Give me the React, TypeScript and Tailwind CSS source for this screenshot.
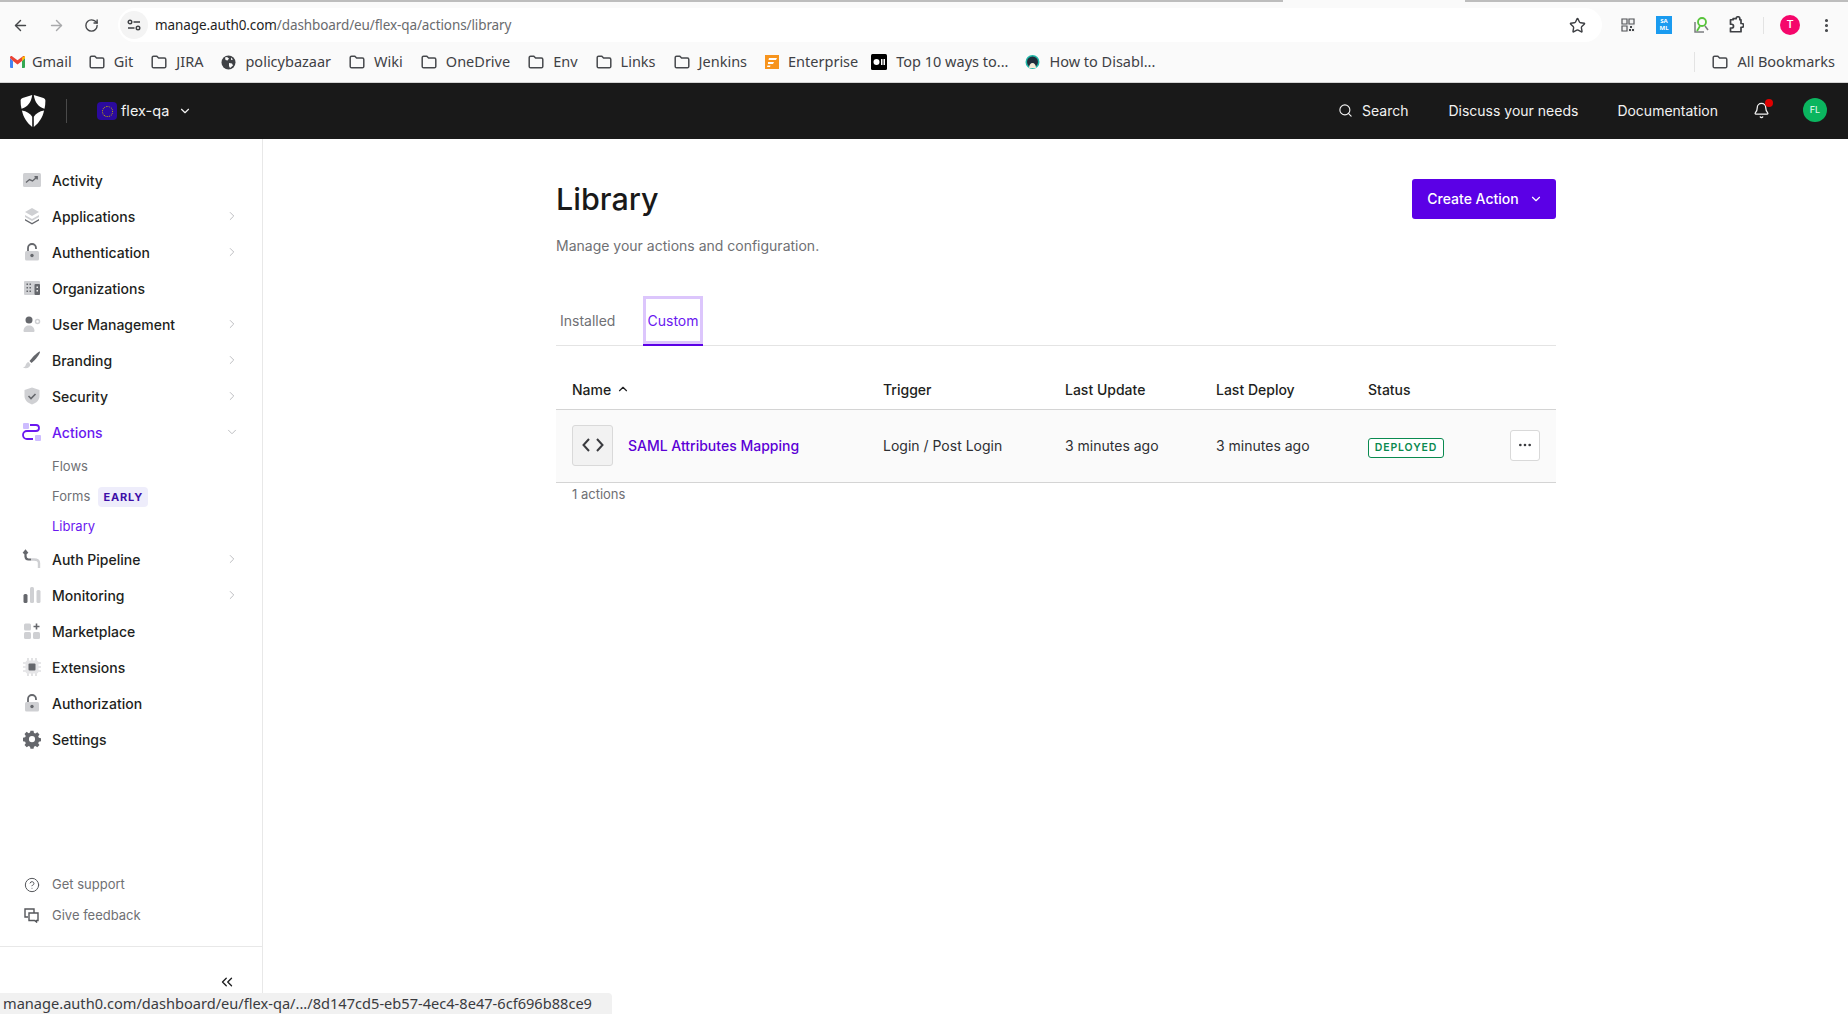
import { ArrowLeft, ArrowRight, RotateCw, Star, Search, Bell, ChevronRight, ChevronDown, ChevronUp, ChevronsLeft, Ellipsis, CircleHelp, MoreVertical } from 'lucide-react';
import type { ReactNode } from 'react';

const inter = 'font-["Inter",sans-serif]';
const L = '#cfd0d3';
const D = '#65676c';

function Folder() {
  return (
    <svg width="16" height="14" viewBox="0 0 16 14" fill="none" stroke="#47494d" strokeWidth="1.5" className="shrink-0">
      <path d="M1.2 2.6c0-.8.6-1.4 1.4-1.4h3.2l1.8 1.9h5.8c.8 0 1.4.6 1.4 1.4v6.9c0 .8-.6 1.4-1.4 1.4H2.6c-.8 0-1.4-.6-1.4-1.4z" />
    </svg>
  );
}

function GmailIcon() {
  return (
    <svg width="15" height="12" viewBox="0 0 15 12" className="mr-[-2px] shrink-0">
      <path d="M0 2v9a1 1 0 0 0 1 1h2V5z" fill="#4285f4" />
      <path d="M12 5v7h2a1 1 0 0 0 1-1V2z" fill="#34a853" />
      <path d="M0 1.5C0 .2 1.4-.4 2.4.4L7.5 4.3 12.6.4c1-.8 2.4-.2 2.4 1.1V2l-3 3-4.500 3.400L3 5 0 2z" fill="#ea4335" />
      <path d="M12 1.500 15 0v2l-3 3z" fill="#fbbc04" />
    </svg>
  );
}

function Globe() {
  return (
    <svg width="15" height="15" viewBox="0 0 15 15" className="shrink-0">
      <circle cx="7.500" cy="7.500" r="7" fill="#3f4145" />
      <path d="M4 2.500 6 2l2 1.500-1.500 2L4.500 5zM8 8l3 .5 1 2-3 2.500-1-2zM10 2.500l2 2-2 .5z" fill="#fafafa" />
    </svg>
  );
}

function Bookmark({ icon, label, className = '' }: { icon: ReactNode; label: string; className?: string }) {
  return (
    <div className={`flex items-center gap-[9px] ${className}`}>
      {icon}
      <span className="whitespace-nowrap">{label}</span>
    </div>
  );
}

function ChromeBar() {
  return (
    <div className="shrink-0 bg-[#fafafa] font-['Noto_Sans',sans-serif]">
      <div className="flex h-[2px]">
        <div className="w-[1283px] bg-[#bdbdbd]" />
        <div className="w-[182px]" />
        <div className="flex-1 bg-[#bdbdbd]" />
      </div>
      <div className="h-[6px]" />
      <div className="flex h-[34px] items-center">
        <div className="flex w-[118px] shrink-0 items-center gap-[19px] pl-[12px]">
          <ArrowLeft size={17} strokeWidth={2} color="#45474a" />
          <ArrowRight size={17} strokeWidth={2} color="#a8a9ab" />
          <RotateCw size={15} strokeWidth={2.200} color="#45474a" />
        </div>
        <div className="flex h-[34px] w-[1484px] items-center rounded-full bg-white">
          <div className="ml-[2px] flex h-[28px] w-[28px] items-center justify-center rounded-full bg-[#f4f4f4]">
            <svg width="14" height="12" viewBox="0 0 14 12" fill="none" stroke="#3e4044" strokeWidth="1.400">
              <circle cx="3" cy="3" r="1.800" />
              <path d="M6.500 3H13M1 9h6.500" />
              <circle cx="11" cy="9" r="1.800" />
            </svg>
          </div>
          <span className="ml-[7px] whitespace-nowrap text-[13.500px] tracking-[-0.1px] text-[#1f1f1f]">
            manage.auth0.com<span className="text-[#6a6b6e]">/dashboard/eu/flex-qa/actions/library</span>
          </span>
          <Star size={17} strokeWidth={2} color="#3e4044" className="ml-auto mr-[16px]" />
        </div>
        <div className="flex flex-1 items-center pl-[19px]">
          <svg width="14" height="14" viewBox="0 0 14 14" className="shrink-0">
            <rect width="14" height="14" fill="#f1f1f1" />
            <path d="M1 1h5v5H1zM8 1h5v5H8zM1 8h5v5H1z" fill="none" stroke="#55575b" strokeWidth="1.200" />
            <path d="M9 8h2v2H9zM11 11h2v2h-2zM8 11h2v2H8z" fill="#45474a" />
          </svg>
          <div className="ml-[21px] flex h-[18px] w-[16px] shrink-0 flex-col items-center justify-center bg-[#1a9bf0] text-[6px] font-bold leading-[7px] text-white">
            <span>SA</span>
            <span>ML</span>
          </div>
          <svg width="18" height="18" viewBox="0 0 18 18" fill="none" className="ml-[20px] shrink-0">
            <path d="M3 6v10h9" stroke="#7b7d80" strokeWidth="1.500" />
            <circle cx="10" cy="6" r="4" stroke="#58c43c" strokeWidth="1.800" />
            <path d="M8 10l-3 5" stroke="#58c43c" strokeWidth="1.800" />
            <path d="M13 10l3 4" stroke="#7b7d80" strokeWidth="1.500" />
          </svg>
          <svg width="18" height="18" viewBox="0 0 24 24" fill="none" stroke="#3e4044" strokeWidth="2.300" strokeLinejoin="round" className="ml-[16px] shrink-0">
            <path d="M9.500 3.500h4a2.500 2.500 0 0 1 5 0V5H20v5h1a2.500 2.500 0 0 1 0 5h-1v6H6v-5h1.500a2.500 2.500 0 0 0 0-5H6V5h3.500z" />
          </svg>
          <div className="ml-[19px] h-[17px] w-[1px] bg-[#e3e3e3]" />
          <div className="ml-[16px] flex h-[20px] w-[20px] shrink-0 items-center justify-center rounded-full bg-[#f5066b] font-['Roboto',sans-serif] text-[11px] font-medium text-white">T</div>
          <MoreVertical size={17} strokeWidth={2.400} color="#45474a" className="ml-[18px] shrink-0" />
        </div>
      </div>
      <div className="flex h-[41px] items-center border-b border-[#d4d4d4] pl-[10px] text-[14.500px] text-[#3f4145]">
        <Bookmark icon={<GmailIcon />} label="Gmail" />
        <Bookmark icon={<Folder />} label="Git" className="ml-[17px]" />
        <Bookmark icon={<Folder />} label="JIRA" className="ml-[18px]" />
        <Bookmark icon={<Globe />} label="policybazaar" className="ml-[18px]" />
        <Bookmark icon={<Folder />} label="Wiki" className="ml-[18px]" />
        <Bookmark icon={<Folder />} label="OneDrive" className="ml-[18px]" />
        <Bookmark icon={<Folder />} label="Env" className="ml-[18px]" />
        <Bookmark icon={<Folder />} label="Links" className="ml-[18px]" />
        <Bookmark icon={<Folder />} label="Jenkins" className="ml-[18px]" />
        <Bookmark
          icon={
            <svg width="14" height="14" viewBox="0 0 14 14" className="shrink-0">
              <rect width="14" height="14" fill="#f7941d" />
              <path d="M4 3h8L11 5H3.500zM3 7h6L8 9H3zM2.500 10.500h3L5 12H2z" fill="#fff" />
            </svg>
          }
          label="Enterprise"
          className="ml-[18px]"
        />
        <Bookmark
          icon={
            <svg width="16" height="16" viewBox="0 0 16 16" className="shrink-0">
              <rect width="16" height="16" rx="1.500" fill="#000" />
              <circle cx="5.500" cy="8" r="3" fill="#fff" />
              <path d="M10 5h1.500v6H10zM12.500 5H14v6h-1.500z" fill="#fff" />
            </svg>
          }
          label="Top 10 ways to..."
          className="ml-[13px]"
        />
        <Bookmark
          icon={
            <svg width="15" height="16" viewBox="0 0 15 16" className="shrink-0">
              <circle cx="7.500" cy="8" r="7" fill="#21b7a8" />
              <circle cx="7.500" cy="8" r="5.500" fill="#1f2d3a" />
              <path d="M4 14c0-3 1.500-5 3.500-5s3.500 2 3.500 5z" fill="#f2e9d5" />
            </svg>
          }
          label="How to Disabl..."
          className="ml-[17px]"
        />
        <div className="ml-auto h-[20px] w-[1px] bg-[#e3e3e3]" />
        <Bookmark icon={<Folder />} label="All Bookmarks" className="ml-[17px] mr-[13px]" />
      </div>
    </div>
  );
}

function Logo() {
  return (
    <svg width="26" height="32" viewBox="0 0 26 32" fill="#fff">
      <path d="M12.200 0 2.600 2.900C1.400 3.300.6 4.400.6 5.700c0 2.800.3 5.500.9 8.100 5.700-1.300 9.900-6.700 10.700-13.800z" />
      <path d="M13.800 0l9.600 2.900c1.200.4 2 1.500 2 2.800 0 2.800-.3 5.500-.9 8.100-5.700-1.300-9.900-6.700-10.700-13.800z" />
      <path d="M1.900 15.600c1.500 6.900 5.100 12.500 10.300 16.400V21.800c-1.900-3.100-5.700-5.500-10.300-6.200z" />
      <path d="M24.100 15.600c-1.500 6.900-5.100 12.500-10.300 16.400V21.800c1.900-3.100 5.700-5.500 10.300-6.200z" />
    </svg>
  );
}

function TopNav() {
  return (
    <div className={`flex h-[56px] shrink-0 items-center bg-[#191919] text-[14px] text-[#f2f2f2] ${inter}`}>
      <div className="ml-[20px]">
        <Logo />
      </div>
      <div className="ml-[20px] h-[24px] w-[1px] bg-[#4a4a4a]" />
      <div className="ml-[30px] flex h-[18px] w-[20px] items-center justify-center rounded-[4px] bg-[#2b0a9e]">
        <div className="h-[11px] w-[11px] rounded-full border border-dotted border-[#c8b400]" />
      </div>
      <span className="ml-[4px] text-[14.500px]">flex-qa</span>
      <ChevronDown size={14} strokeWidth={2} className="ml-[9px]" />
      <div className="ml-auto flex items-center pb-[2px]">
        <Search size={15} strokeWidth={1.800} />
        <span className="ml-[9px]">Search</span>
        <span className="ml-[40px]">Discuss your needs</span>
        <span className="ml-[39px]">Documentation</span>
        <div className="relative ml-[35px]">
          <Bell size={17} strokeWidth={1.800} />
          <div className="absolute right-[-3px] top-[-3px] h-[8px] w-[8px] rounded-full bg-[#e00000]" />
        </div>
        <div className="ml-[33px] mr-[21px] flex h-[24px] w-[24px] items-center justify-center rounded-full bg-[#0bb55f] text-[9px] font-medium text-[#d9f5e5]">FL</div>
      </div>
    </div>
  );
}

// duotone sidebar glyphs, two greys like the original
const icons: Record<string, ReactNode> = {
  Activity: (
    <>
      <rect x="1" y="3" width="18" height="14" rx="1.500" fill={L} />
      <path d="M4 12.500 7.500 9.500l3 1.500L15 7M12.500 6.800H15.200V9.500" fill="none" stroke={D} strokeWidth="1.400" />
    </>
  ),
  Applications: (
    <>
      <path d="M10 2l7 4-7 4-7-4z" fill={L} />
      <path d="M3 9l7 4 7-4v2l-7 4-7-4z" fill={L} />
      <path d="M3 13l7 4 7-4v1.500l-7 4-7-4z" fill={D} />
    </>
  ),
  Authentication: (
    <>
      <path d="M6 9V6a4 4 0 0 1 8 0v1" fill="none" stroke={D} strokeWidth="1.800" />
      <rect x="3" y="9" width="14" height="9.500" rx="1.500" fill={L} />
      <circle cx="10" cy="13.500" r="1.700" fill={D} />
    </>
  ),
  Organizations: (
    <>
      <rect x="2" y="3" width="16" height="14" rx="1" fill={L} />
      <rect x="12.500" y="6" width="5.500" height="11" rx="1" fill={D} />
      <path d="M4.500 5.500h1.500V7H4.500zM7.500 5.500H9V7H7.500zM4.500 9h1.500v1.500H4.500zM7.500 9H9v1.500H7.500zM4.500 12.500h1.500V14H4.500zM7.500 12.500H9V14H7.500z" fill={D} />
      <path d="M14.500 8.500h1.500V10h-1.500zM14.500 12h1.500v1.500h-1.500z" fill="#eee" />
    </>
  ),
  'User Management': (
    <>
      <circle cx="7" cy="6" r="3.500" fill={D} />
      <path d="M1.500 17c0-3.500 2.500-5.500 5.500-5.500s5.500 2 5.500 5.500c0 .5-.5 1-1 1h-9c-.5 0-1-.5-1-1z" fill={L} />
      <circle cx="15.500" cy="7.500" r="2" fill="none" stroke={L} strokeWidth="1.500" />
    </>
  ),
  Branding: (
    <>
      <path d="M18 1.500c.5 1.500-4 8-8.500 11.500L7.500 11C11 6.500 16.500 1 18 1.500z" fill={D} />
      <path d="M6.500 12c-2 .5-2.500 2-3 3.500-.3 1-1 1.500-2.500 2 3 1.500 7 .5 7.500-3z" fill={L} />
    </>
  ),
  Security: (
    <>
      <path d="M10 1.500l7.500 2.500v6c0 4-3 7-7.500 8.500C5.500 17 2.500 14 2.500 10V4z" fill={L} />
      <path d="M6.500 10l2.500 2.500 4.500-4.500" fill="none" stroke={D} strokeWidth="1.600" />
    </>
  ),
  Actions: (
    <>
      <rect x="1" y="1" width="6" height="6" rx="1" fill="#cdbcff" />
      <rect x="13" y="13" width="6" height="6" rx="1" fill="#cdbcff" />
      <path d="M8 3h6a3 3 0 0 1 0 6H5a3.500 3.500 0 0 0 0 8h6" fill="none" stroke="#6a18f0" strokeWidth="1.800" />
    </>
  ),
  'Auth Pipeline': (
    <>
      <path d="M3.500 8V2M1.500 4.500 3.500 2l2 2.500M3.500 7c0 2 1 3.500 3 3.500H9" fill="none" stroke={D} strokeWidth="2.200" />
      <path d="M9 10.500h3c3 0 5 1.500 5 3.500v5" fill="none" stroke={L} strokeWidth="2.400" />
    </>
  ),
  Monitoring: (
    <>
      <rect x="1.500" y="9" width="4" height="9" rx="1.500" fill={D} />
      <rect x="8" y="2" width="4" height="16" rx="1.500" fill={L} />
      <rect x="14.500" y="5" width="4" height="13" rx="1.500" fill={L} />
    </>
  ),
  Marketplace: (
    <>
      <rect x="2" y="2.500" width="7" height="7" rx="1.500" fill={L} />
      <rect x="2" y="11" width="7" height="7" rx="1.500" fill={L} />
      <rect x="11" y="11" width="7" height="7" rx="1.500" fill={L} />
      <path d="M14.500 2.500v6M11.500 5.500h6" stroke={D} strokeWidth="1.600" />
    </>
  ),
  Extensions: (
    <>
      <path d="M6 1v18M10 1v18M14 1v18M1 6h18M1 10h18M1 14h18" stroke={L} strokeWidth="1.200" />
      <rect x="3.500" y="3.500" width="13" height="13" rx="2" fill="#e5e5e7" />
      <rect x="6.500" y="6.500" width="7" height="7" rx="1" fill={D} />
    </>
  ),
  Authorization: (
    <>
      <path d="M6 9V6a4 4 0 0 1 8 0v1" fill="none" stroke={D} strokeWidth="1.800" />
      <rect x="3" y="9" width="14" height="9.500" rx="1.500" fill={L} />
      <circle cx="10" cy="13.500" r="1.700" fill={D} />
    </>
  ),
  Settings: (
    <path
      fillRule="evenodd"
      d="M8.300 1h3.400l.5 2.500 1.600.7 2.100-1.400 2.400 2.400-1.400 2.100.7 1.600 2.400.5v3.400l-2.400.5-.7 1.600 1.400 2.100-2.400 2.400-2.100-1.400-1.600.7-.5 2.300H8.300l-.5-2.300-1.600-.7-2.100 1.400-2.400-2.400 1.400-2.100-.7-1.600-2.400-.5V8.900l2.400-.5.7-1.600-1.400-2.100 2.400-2.400 2.100 1.400 1.600-.7zM10 7a3.400 3.400 0 1 0 0 6.800A3.400 3.400 0 0 0 10 7z"
      fill={D}
      transform="translate(1 .8) scale(.9)"
    />
  ),
};

const topItems: { label: string; chevron?: boolean }[] = [
  { label: 'Activity' },
  { label: 'Applications', chevron: true },
  { label: 'Authentication', chevron: true },
  { label: 'Organizations' },
  { label: 'User Management', chevron: true },
  { label: 'Branding', chevron: true },
  { label: 'Security', chevron: true },
];

const lowerItems: { label: string; chevron?: boolean }[] = [
  { label: 'Auth Pipeline', chevron: true },
  { label: 'Monitoring', chevron: true },
  { label: 'Marketplace' },
  { label: 'Extensions' },
  { label: 'Authorization' },
  { label: 'Settings' },
];

function NavItem({ label, chevron, active }: { label: string; chevron?: boolean; active?: boolean }) {
  return (
    <div className="flex h-[36px] items-center pl-[22px] pr-[23px]">
      <svg width="20" height="20" viewBox="0 0 20 20" className="shrink-0">
        {icons[label]}
      </svg>
      <span className={`ml-[10px] text-[14px] font-medium ${active ? 'text-[#6a18f0]' : 'text-[#1e1f21]'}`}>{label}</span>
      {chevron && <ChevronRight size={14} strokeWidth={1.500} color="#b4b5b8" className="ml-auto" />}
      {active && <ChevronDown size={14} strokeWidth={1.500} color="#b4b5b8" className="ml-auto" />}
    </div>
  );
}

function Sidebar() {
  return (
    <aside className={`relative flex w-[263px] shrink-0 flex-col border-r border-[#e8e8e8] bg-white pt-[23px] ${inter}`}>
      {topItems.map((item) => (
        <NavItem key={item.label} {...item} />
      ))}
      <NavItem label="Actions" active />
      <div className="flex flex-col pl-[52px] pt-[2px] text-[13px] text-[#6f7074]">
        <div className="flex h-[30px] items-center">Flows</div>
        <div className="flex h-[30px] items-center">
          Forms
          <span className="ml-[8px] flex h-[20px] w-[50px] items-center justify-center rounded-[4px] bg-[#eeedfb] text-[11px] font-bold tracking-[0.8px] text-[#3d0fa8]">EARLY</span>
        </div>
        <div className="flex h-[29px] items-center pt-[1px] text-[#6a18f0]">Library</div>
      </div>
      {lowerItems.map((item) => (
        <NavItem key={item.label} {...item} />
      ))}
      <div className="mt-auto flex flex-col text-[13px] text-[#6f7074]">
        <div className="flex h-[31px] items-center pl-[24px]">
          <CircleHelp size={16} strokeWidth={1.500} color="#55575b" />
          <span className="ml-[12px]">Get support</span>
        </div>
        <div className="flex h-[31px] items-center pl-[24px]">
          <svg width="15" height="15" viewBox="0 0 15 15" fill="none" stroke="#55575b" strokeWidth="1.400">
            <path d="M10 5V1H1v8h3" />
            <path d="M5 5h9v7.500h-1.500V14l-2-1.500H5z" />
          </svg>
          <span className="ml-[13px]">Give feedback</span>
        </div>
        <div className="mt-[15px] flex h-[68px] items-start justify-end border-t border-[#e8e8e8] pr-[26px] pt-[26px]">
          <ChevronsLeft size={18} strokeWidth={1.800} color="#1e1f21" />
        </div>
      </div>
    </aside>
  );
}

const th = 'flex items-center text-[14px] font-medium text-[#1e1f21]';
const cols = 'grid-cols-[311px_182px_151px_152px_1fr]';

function Content() {
  return (
    <main className={`flex-1 bg-white pl-[293px] pr-[292px] pt-[40px] ${inter}`}>
      <div className="flex h-[40px] items-center justify-between">
        <h1 className="text-[30.500px] font-medium text-[#191919]">Library</h1>
        <button className="flex h-[40px] w-[144px] items-center justify-center rounded-[3px] bg-[#5b00e6] pb-[1px] pl-[2px] text-[14px] font-medium text-white">
          Create Action
          <ChevronDown size={14} strokeWidth={2} className="ml-[10px]" />
        </button>
      </div>
      <p className="mt-[16px] text-[14px] text-[#6f7074]">Manage your actions and configuration.</p>

      <div className="mt-[39px] flex h-[51px] items-end border-b border-[#e4e4e4] text-[14px]">
        <div className="mb-[-1px] flex h-[50px] w-[64px] items-center pb-[2px] pl-[4px] text-[#6f7074]">Installed</div>
        <div className="mb-[-1px] ml-[23px] flex h-[50px] w-[60px] items-center justify-center border-b-[2px] border-[#5b00e6] text-[#6a18f0] shadow-[inset_0_0_0_3px_#dcc6fc]">Custom</div>
      </div>

      <div className={`mt-[20px] grid h-[44px] ${cols} items-center border-b border-[#d4d4d4] px-[16px] pt-[3px]`}>
        <div className={th}>
          Name
          <ChevronUp size={14} strokeWidth={2} className="ml-[5px]" />
        </div>
        <div className={th}>Trigger</div>
        <div className={th}>Last Update</div>
        <div className={th}>Last Deploy</div>
        <div className={th}>Status</div>
      </div>
      <div className={`grid h-[73px] ${cols} items-center border-b border-[#d4d4d4] bg-[#fafafa] px-[16px] pb-[2px] text-[14px] text-[#2e2f33]`}>
        <div className="flex items-center">
          <div className="flex h-[41px] w-[41px] items-center justify-center rounded-[3px] border border-[#d9d9d9] bg-[#f2f2f2]">
            <svg width="22" height="16" viewBox="0 0 22 16" fill="none" stroke="#3a3b3f" strokeWidth="2">
              <path d="M7 2 1.500 8 7 14M15 2l5.500 6-5.500 6" />
            </svg>
          </div>
          <span className="ml-[15px] font-medium text-[#5b00d6]">SAML Attributes Mapping</span>
        </div>
        <div>Login / Post Login</div>
        <div>3 minutes ago</div>
        <div>3 minutes ago</div>
        <div className="flex items-center justify-between">
          <span className="mt-[6px] flex h-[20px] w-[76px] items-center justify-center rounded-[3px] border border-[#0a8a50] bg-white text-[10.500px] font-semibold tracking-[0.9px] text-[#0a8a50]">DEPLOYED</span>
          <div className="flex h-[31px] w-[30px] items-center justify-center rounded-[3px] border border-[#d9d9d9] bg-white">
            <Ellipsis size={16} color="#3a3b3f" />
          </div>
        </div>
      </div>
      <p className="mt-[2px] pl-[16px] text-[13px] text-[#6f7074]">1 actions</p>
    </main>
  );
}

export default function App() {
  return (
    <div className="relative flex h-[1014px] flex-col overflow-hidden bg-white">
      <ChromeBar />
      <TopNav />
      <div className="flex min-h-0 flex-1">
        <Sidebar />
        <Content />
      </div>
      <div className="absolute bottom-0 left-0 flex h-[21px] w-[612px] items-center whitespace-nowrap rounded-tr-[4px] bg-[#f1f1f1] pl-[3px] font-['Noto_Sans',sans-serif] text-[14.600px] text-[#3a3b3f]">
        manage.auth0.com/dashboard/eu/flex-qa/.../8d147cd5-eb57-4ec4-8e47-6cf696b88ce9
      </div>
    </div>
  );
}
